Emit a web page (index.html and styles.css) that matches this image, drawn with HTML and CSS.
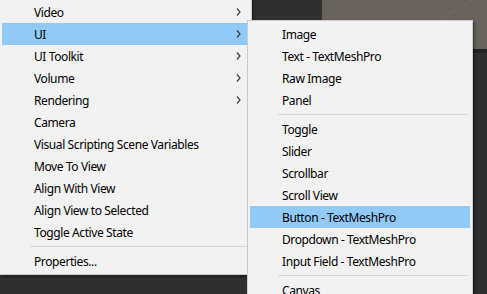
FILE: index.html
```html
<!DOCTYPE html>
<html>
<head>
<meta charset="utf-8">
<link rel="stylesheet" href="styles.css">
</head>
<body>
<div class="scene">
  <div class="bg-view"></div>
  <div class="bg-dark"></div>
  <div class="menu main">
    <div class="item">Video<svg class="arrow" width="5" height="8" viewBox="0 0 5 8"><polyline points="1,0.5 4,4 1,7.5" /></svg></div>
    <div class="item active">UI<svg class="arrow" width="5" height="8" viewBox="0 0 5 8"><polyline points="1,0.5 4,4 1,7.5" /></svg></div>
    <div class="item">UI Toolkit<svg class="arrow" width="5" height="8" viewBox="0 0 5 8"><polyline points="1,0.5 4,4 1,7.5" /></svg></div>
    <div class="item">Volume<svg class="arrow" width="5" height="8" viewBox="0 0 5 8"><polyline points="1,0.5 4,4 1,7.5" /></svg></div>
    <div class="item">Rendering<svg class="arrow" width="5" height="8" viewBox="0 0 5 8"><polyline points="1,0.5 4,4 1,7.5" /></svg></div>
    <div class="item">Camera</div>
    <div class="item">Visual Scripting Scene Variables</div>
    <div class="item">Move To View</div>
    <div class="item">Align With View</div>
    <div class="item">Align View to Selected</div>
    <div class="item">Toggle Active State</div>
    <div class="sep"></div>
    <div class="item">Properties...</div>
  </div>
  <div class="menu sub">
    <div class="item">Image</div>
    <div class="item">Text - TextMeshPro</div>
    <div class="item">Raw Image</div>
    <div class="item">Panel</div>
    <div class="sep"></div>
    <div class="item">Toggle</div>
    <div class="item">Slider</div>
    <div class="item">Scrollbar</div>
    <div class="item">Scroll View</div>
    <div class="item active">Button - TextMeshPro</div>
    <div class="item">Dropdown - TextMeshPro</div>
    <div class="item">Input Field - TextMeshPro</div>
    <div class="sep"></div>
    <div class="item">Canvas</div>
  </div>
</div>
</body>
</html>
```
FILE: styles.css
```css
html, body {
  margin: 0;
  padding: 0;
  background: #2f2f2f;
}
.scene {
  position: relative;
  width: 487px;
  height: 294px;
  overflow: hidden;
  background: #303030;
}
.bg-view {
  position: absolute;
  left: 322px;
  top: 0;
  width: 165px;
  height: 49px;
  background: linear-gradient(150deg, #68625d 0 60%, #6e6863 60% 61%, #68625d 61%);
}
.bg-dark {
  position: absolute;
  left: 322px;
  top: 49px;
  width: 165px;
  height: 4px;
  background: #232323;
}
.menu {
  position: absolute;
  background: #f2f2f2;
  border: 1px solid #cccccc;
  padding: 2px;
  font-family: "Noto Sans", "Open Sans", sans-serif;
  font-size: 12px;
  letter-spacing: -0.4px;
  color: #000;
  box-shadow: 2px 2px 2px rgba(0, 0, 0, 0.35);
}
.main {
  left: -1px;
  top: -2px;
  width: 247px;
}
.sub {
  left: 247px;
  top: 20px;
  width: 220px;
}
.item {
  height: 22px;
  display: flex;
  align-items: center;
  padding-left: 32px;
  padding-right: 8px;
  white-space: nowrap;
}
.item.active {
  background: #91c9f7;
}
.arrow {
  margin-left: auto;
  fill: none;
  stroke: #3c3c3c;
  stroke-width: 1.2;
}
.sep {
  height: 7px;
  margin-left: 28px;
  margin-right: 2px;
  display: flex;
  align-items: center;
}
.sep::before {
  content: "";
  flex: 1;
  height: 1px;
  background: #d7d7d7;
}
```
